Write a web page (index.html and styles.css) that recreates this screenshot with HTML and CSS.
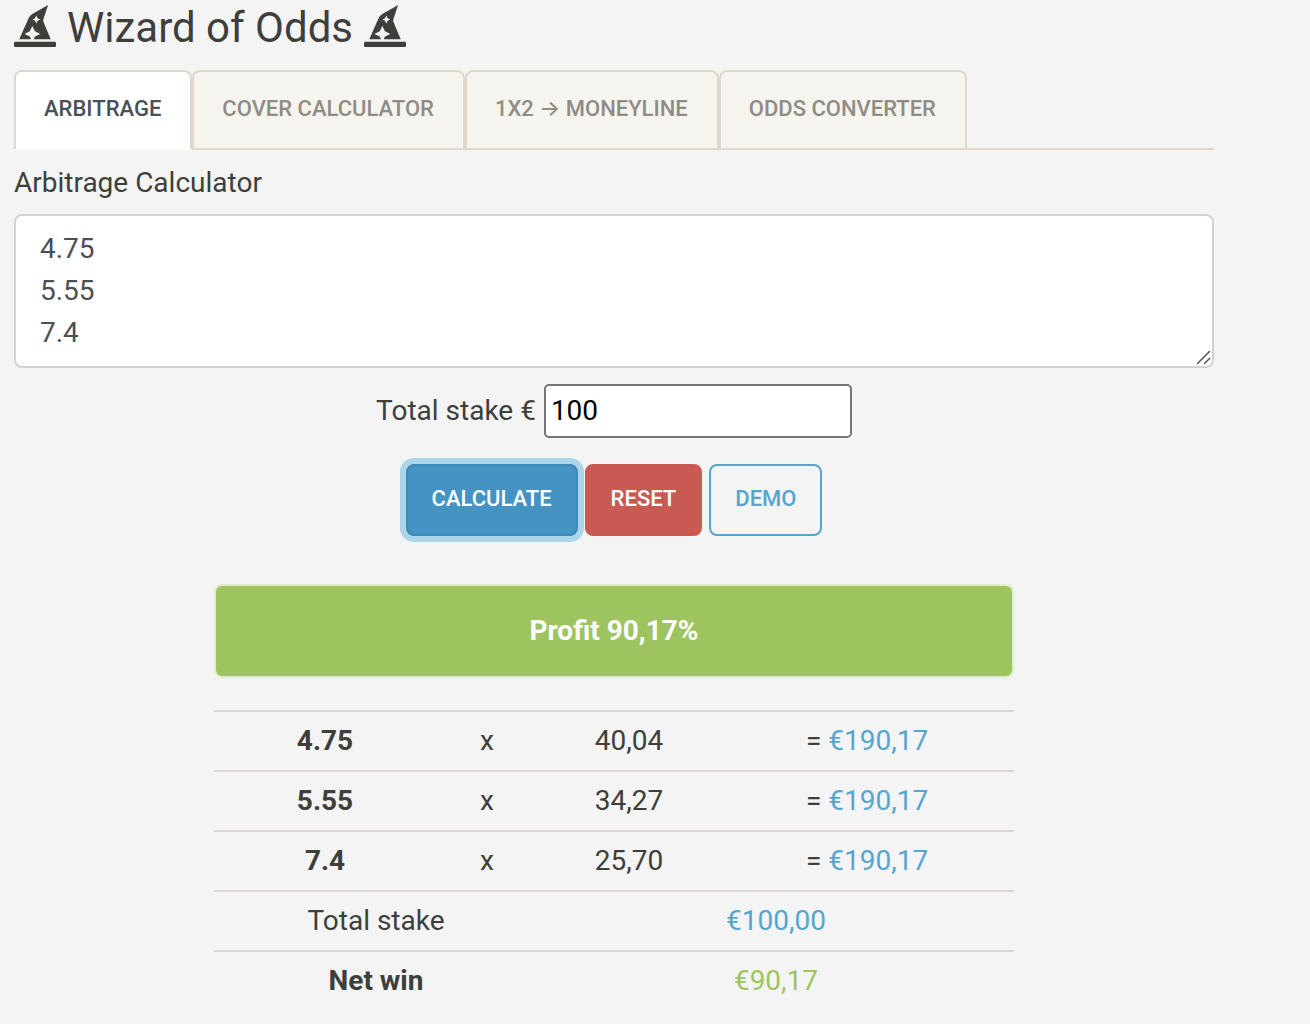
FILE: index.html
```html
<!DOCTYPE html>
<html lang="en">
<head>
    <meta charset="UTF-8">
    <meta name="viewport" content="width=device-width, initial-scale=1.0">
    <title>Wizard of Odds</title>
    <link rel="stylesheet" href="styles.css">
</head>
<body>
    <svg class="sprite" aria-hidden="true">
        <symbol id="hat-wizard" viewBox="0 0 512 512">
            <path d="M496 448H16c-8.84 0-16 7.16-16 16v32c0 8.84 7.16 16 16 16h480c8.84 0 16-7.16 16-16v-32c0-8.84-7.16-16-16-16zm-304-64l-64-32 64-32 32-64 32 64 64 32-64 32-16 32h208l-86.41-201.63a63.955 63.955 0 0 1-1.89-45.45L416 0 228.42 107.19a127.989 127.989 0 0 0-53.46 59.15L64 416h144l-16-32zm64-224l16-32 16 32 32 16-32 16-16 32-16-32-32-16 32-16z"/>
        </symbol>
    </svg>

    <div class="container">
        <h1>
            <svg class="hat"><use href="#hat-wizard"/></svg>
            Wizard of Odds
            <svg class="hat"><use href="#hat-wizard"/></svg>
        </h1>

        <nav class="tabs">
            <a class="tab active" href="#arbitrage">Arbitrage</a>
            <a class="tab" href="#cover">Cover Calculator</a>
            <a class="tab" href="#moneyline">1x2 → Moneyline</a>
            <a class="tab" href="#converter">Odds Converter</a>
        </nav>

        <form id="arbitrage">
            <label class="odds-label" for="odds">Arbitrage Calculator</label>
            <textarea id="odds" class="odds" rows="3">4.75
5.55
7.4</textarea>

            <div class="stake">
                <label for="stake">Total stake €</label>
                <input id="stake" class="stake-input" type="text" value="100">
            </div>

            <div class="buttons">
                <button type="button" class="btn btn-primary">Calculate</button>
                <button type="button" class="btn btn-danger">Reset</button>
                <button type="button" class="btn btn-outline">Demo</button>
            </div>
        </form>

        <div class="results">
            <div class="alert">Profit 90,17%</div>
            <table>
                <colgroup>
                    <col class="col-odds">
                    <col class="col-times">
                    <col class="col-stake">
                    <col>
                </colgroup>
                <tr>
                    <th>4.75</th>
                    <td>x</td>
                    <td>40,04</td>
                    <td>= <span class="info">€190,17</span></td>
                </tr>
                <tr>
                    <th>5.55</th>
                    <td>x</td>
                    <td>34,27</td>
                    <td>= <span class="info">€190,17</span></td>
                </tr>
                <tr>
                    <th>7.4</th>
                    <td>x</td>
                    <td>25,70</td>
                    <td>= <span class="info">€190,17</span></td>
                </tr>
                <tr>
                    <td colspan="2">Total stake</td>
                    <td colspan="2" class="info">€100,00</td>
                </tr>
                <tr>
                    <th colspan="2">Net win</th>
                    <td colspan="2" class="success">€90,17</td>
                </tr>
            </table>
        </div>
    </div>
</body>
</html>
```
FILE: styles.css
```css
* {
    box-sizing: border-box;
}

body {
    margin: 0;
    padding: 0 14px;
    background-color: #f4f4f4;
    color: #3e3f3a;
    font-family: Roboto, Inter, sans-serif;
    font-size: 28px;
    line-height: 42px;
}

.sprite {
    display: none;
}

.container {
    max-width: 1200px;
}

h1 {
    display: flex;
    align-items: center;
    gap: 11px;
    margin: 0;
    padding: 3px 0 17px;
    font-size: 42px;
    font-weight: 400;
    line-height: 50px;
}

.hat {
    width: 42px;
    height: 42px;
    margin-bottom: 4px;
    fill: currentColor;
}

/* Tabs */
.tabs {
    display: flex;
    border-bottom: 2px solid #dfd7ca;
}

.tab {
    margin-bottom: -2px;
    padding: 21px 29px 23px 28px;
    border: 2px solid #dfd7ca;
    border-radius: 8px 8px 0 0;
    background-color: #f6f4ef;
    color: #8e8c84;
    font-size: 22px;
    font-weight: 500;
    line-height: 32px;
    text-decoration: none;
    text-transform: uppercase;
}

.tab.active {
    border-bottom-color: #fff;
    background-color: #fff;
    color: #495057;
}

/* Form */
.odds-label {
    display: block;
    padding: 12px 0 10px;
}

.odds {
    display: block;
    width: 100%;
    padding: 12px 24px;
    border: 2px solid #d3d3d3;
    border-radius: 8px;
    background-color: #fff;
    color: #495057;
    font: inherit;
    resize: vertical;
    overflow: auto;
}

.odds::-webkit-resizer {
    background: url("data:image/svg+xml,%3Csvg xmlns='http://www.w3.org/2000/svg' viewBox='0 0 15 15'%3E%3Cpath d='M0 13L13 0M7 13L13 7' stroke='%23555' stroke-width='1.5'/%3E%3C/svg%3E") no-repeat;
}

.stake {
    display: flex;
    justify-content: center;
    align-items: center;
    gap: 8px;
    margin-top: 16px;
}

.stake-input {
    width: 308px;
    height: 54px;
    padding: 1px 5px 3px;
    border: 2px solid #767676;
    border-radius: 5px;
    background-color: #fff;
    color: #000;
    font: inherit;
}

.buttons {
    display: flex;
    justify-content: center;
    gap: 7px;
    margin-top: 26px;
}

.btn {
    padding: 17px 24px 19px;
    border: 2px solid transparent;
    border-radius: 8px;
    font-family: inherit;
    font-size: 22px;
    font-weight: 500;
    line-height: 32px;
    text-transform: uppercase;
    cursor: pointer;
}

.btn-primary {
    border-color: #3d8ab8;
    background-color: #4593c2;
    color: #fff;
    box-shadow: 0 0 0 6px #acd5ea;
}

.btn-danger {
    border-color: #c95a52;
    background-color: #c95a52;
    color: #fff;
}

.btn-outline {
    border-color: #54a6d1;
    background-color: transparent;
    color: #54a6d1;
}

/* Results */
.results {
    max-width: 800px;
    margin: 48px auto 0;
}

.alert {
    margin-bottom: 32px;
    padding: 24px;
    border: 2px solid #e0efc6;
    border-radius: 8px;
    background-color: #9dc45f;
    color: #fff;
    font-weight: 700;
    text-align: center;
}

table {
    width: 100%;
    border-spacing: 0;
    table-layout: fixed;
}

.col-odds {
    width: 222px;
}

.col-times {
    width: 102px;
}

.col-stake {
    width: 182px;
}

th, td {
    padding: 8px;
    border-top: 2px solid #dcd8d1;
    text-align: center;
}

.info {
    color: #54a6d1;
}

.success {
    color: #9dc45f;
}
```
